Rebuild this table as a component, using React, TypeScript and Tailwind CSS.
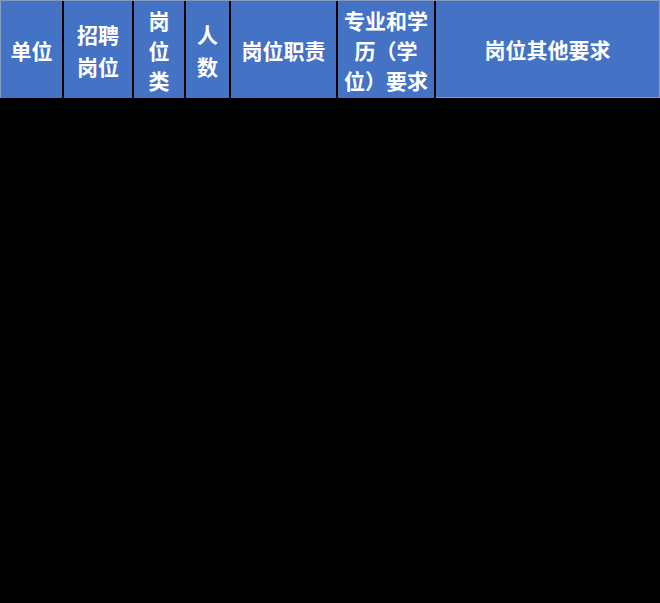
export default function App() {
  const cell =
    "bg-[#4472c4] flex items-center justify-center text-center text-white font-bold text-[21px] leading-[30px]";
  return (
    <div
      className="w-[660px] h-[603px] bg-black"
      style={{ fontFamily: '"Noto Sans CJK SC", "Noto Sans", sans-serif' }}
    >
      <div className="flex h-[98px] gap-[2px] border-l border-t border-[#8a9bc0] bg-black">
        <div className={`${cell} w-[61px]`}>单位</div>
        <div className={`${cell} w-[68px]`}>
          <span className="leading-[32px]">招聘<br />岗位</span>
        </div>
        <div className={`${cell} w-[50px]`}>
          <span>岗<br />位<br />类</span>
        </div>
        <div className={`${cell} w-[43px]`}>
          <span className="leading-[32px]">人<br />数</span>
        </div>
        <div className={`${cell} w-[105px]`}>岗位职责</div>
        <div className={`${cell} w-[96px]`}>
          <span>专业和学<br />历（学<br />位）要求</span>
        </div>
        <div className={`${cell} w-[224px] border-r border-b border-[#8a9bc0]`}>岗位其他要求</div>
      </div>
    </div>
  );
}
